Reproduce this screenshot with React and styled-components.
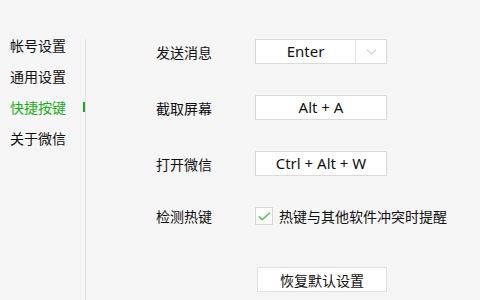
import React from "react";
import styled, { createGlobalStyle } from "styled-components";

const Global = createGlobalStyle`
  html, body { margin: 0; padding: 0; background: #f5f5f5; }
  body { width: 480px; height: 300px; overflow: hidden; font-family: "Noto Sans CJK SC", "Noto Sans", sans-serif; }
`;

const Page = styled.div`
  display: flex;
  width: 480px;
  height: 300px;
  background: #f5f5f5;
  color: #111;
`;

const Sidebar = styled.nav`
  width: 86px;
  padding-top: 30px;
  display: flex;
  flex-direction: column;
  box-sizing: border-box;
`;

const NavItem = styled.div`
  position: relative;
  height: 31px;
  line-height: 31px;
  padding-left: 10px;
  font-size: 14px;
  color: ${(p) => (p.$active ? "#1aad19" : "#111")};
`;

const Indicator = styled.span`
  position: absolute;
  right: 1px;
  top: 10px;
  width: 2px;
  height: 10px;
  background: #1aad19;
  z-index: 1;
`;

const Divider = styled.div`
  width: 1px;
  margin-top: 39px;
  margin-left: -1px;
  background: #e0e0e0;
`;

const Content = styled.section`
  flex: 1;
  padding: 39px 0 0 70px;
  display: flex;
  flex-direction: column;
  gap: 31px;
`;

const Row = styled.div`
  display: flex;
  align-items: center;
  height: ${(p) => p.$h || 25}px;
`;

const Label = styled.div`
  width: 99px;
  font-size: 14px;
  color: #111;
`;

const Box = styled.div`
  box-sizing: border-box;
  width: 132px;
  height: 25px;
  background: #fff;
  border: 1px solid #d9d9d9;
  display: flex;
  align-items: center;
  font-family: "Noto Sans", "Noto Sans CJK SC", sans-serif;
  font-size: 15px;
  color: #111;
`;

const BoxText = styled.div`
  flex: 1;
  text-align: center;
  line-height: 23px;
`;

const DropPart = styled.div`
  width: 30px;
  height: 100%;
  border-left: 1px solid #e0e0e0;
  display: flex;
  align-items: center;
  justify-content: center;
`;

const Check = styled.div`
  box-sizing: border-box;
  width: 18px;
  height: 18px;
  background: #fff;
  border: 1px solid #d6d6d6;
  display: flex;
  align-items: center;
  justify-content: center;
  margin-right: 6px;
`;

const CheckText = styled.span`
  font-size: 14px;
  color: #111;
`;

const ResetButton = styled.button`
  box-sizing: border-box;
  width: 130px;
  height: 25px;
  margin: 11px 0 0 101px;
  background: #fff;
  border: 1px solid #e0e0e0;
  font-family: "Noto Sans CJK SC", sans-serif;
  font-size: 14px;
  color: #111;
  padding: 0;
`;

export default function App() {
  const nav = ["帐号设置", "通用设置", "快捷按键", "关于微信"];
  return (
    <Page>
      <Global />
      <Sidebar>
        {nav.map((n, i) => (
          <NavItem key={n} $active={i === 2}>
            {n}
            {i === 2 && <Indicator />}
          </NavItem>
        ))}
      </Sidebar>
      <Divider />
      <Content>
        <Row>
          <Label>发送消息</Label>
          <Box>
            <BoxText>Enter</BoxText>
            <DropPart>
              <svg width="11" height="6" viewBox="0 0 11 6">
                <path d="M1 0.8 L5.5 5 L10 0.8" fill="none" stroke="#d0d0d0" strokeWidth="1.2" />
              </svg>
            </DropPart>
          </Box>
        </Row>
        <Row>
          <Label>截取屏幕</Label>
          <Box>
            <BoxText>Alt + A</BoxText>
          </Box>
        </Row>
        <Row>
          <Label>打开微信</Label>
          <Box>
            <BoxText>Ctrl + Alt + W</BoxText>
          </Box>
        </Row>
        <Row $h={18}>
          <Label>检测热键</Label>
          <Check>
            <svg width="13" height="9" viewBox="0 0 13 9">
              <path d="M0.8 4.2 L4.2 7.6 L12.2 0.8" fill="none" stroke="#4cc04a" strokeWidth="1.4" />
            </svg>
          </Check>
          <CheckText>热键与其他软件冲突时提醒</CheckText>
        </Row>
        <div>
          <ResetButton>恢复默认设置</ResetButton>
        </div>
      </Content>
    </Page>
  );
}
